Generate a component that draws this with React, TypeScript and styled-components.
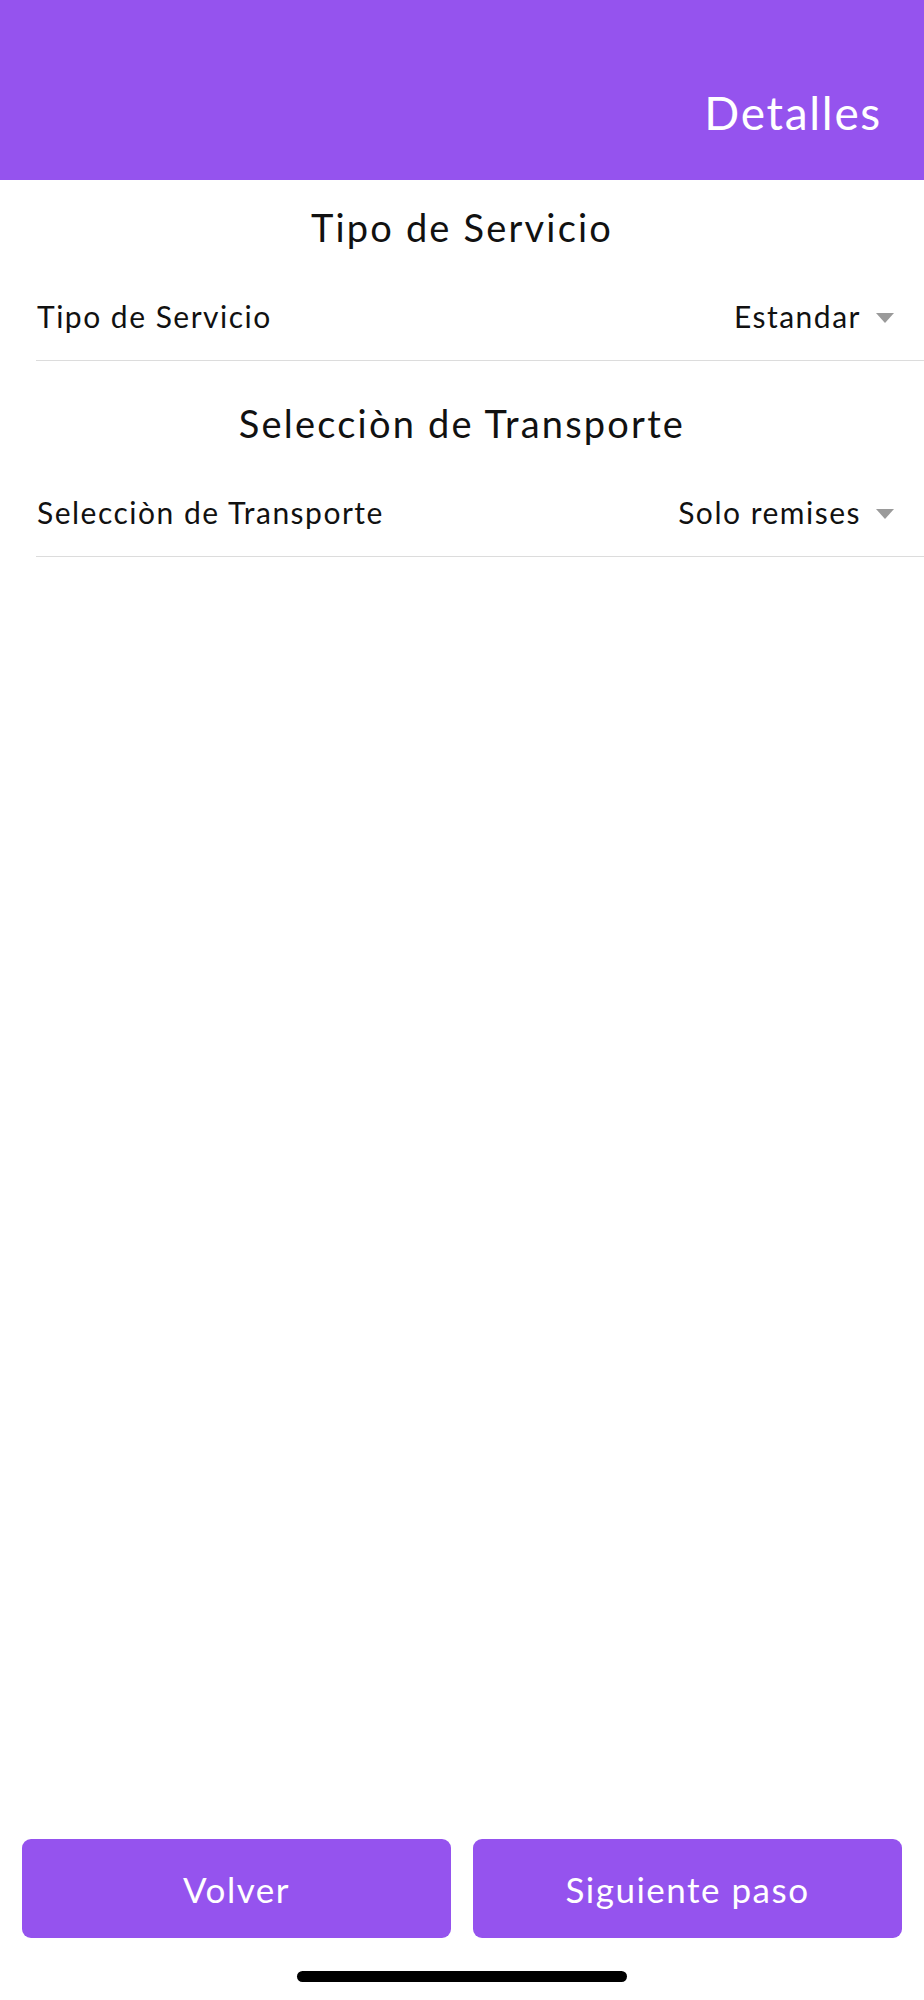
import React from "react";
import styled, { createGlobalStyle } from "styled-components";

const Global = createGlobalStyle`
  html, body { margin: 0; padding: 0; background: #ffffff; }
  body { font-family: Lato, "Open Sans", sans-serif; }
  * { box-sizing: border-box; }
`;

const PURPLE = "#9553ee";

const Page = styled.div`
  width: 924px;
  height: 2000px;
  display: flex;
  flex-direction: column;
  background: #fff;
  font-family: Lato, "Open Sans", sans-serif;
`;

const Header = styled.header`
  height: 180px;
  background: ${PURPLE};
  display: flex;
  align-items: center;
  justify-content: flex-end;
  padding: 45px 42px 0 0;
`;

const HeaderTitle = styled.h1`
  margin: 0;
  font-weight: 400;
  font-size: 46px;
  letter-spacing: 1.7px;
  line-height: 1;
  color: #fff;
`;

const Content = styled.main`
  flex: 1;
  display: flex;
  flex-direction: column;
  padding-top: 19px;
`;

const Section = styled.section`
  display: flex;
  flex-direction: column;
  & + & {
    margin-top: 34px;
  }
`;

const SectionTitle = styled.h2`
  margin: 0;
  height: 60px;
  padding-bottom: 5px;
  display: flex;
  align-items: center;
  justify-content: center;
  font-weight: 400;
  font-size: 38px;
  letter-spacing: 2.2px;
  color: #111;
`;

const Row = styled.div`
  margin-left: 36px;
  height: 102px;
  padding: 12px 30px 0 1px;
  display: flex;
  align-items: center;
  justify-content: space-between;
  border-bottom: 1px solid #dcdcdc;
  font-size: 30px;
  letter-spacing: 1.5px;
  color: #111;
`;

const Value = styled.div`
  display: flex;
  align-items: center;
  gap: 15px;
`;

const Caret = styled.span`
  width: 0;
  height: 0;
  margin-top: 4px;
  border-left: 9px solid transparent;
  border-right: 9px solid transparent;
  border-top: 10px solid #9a9a9a;
`;

const Footer = styled.footer`
  display: flex;
  flex-direction: column;
  align-items: center;
  padding: 0 22px 18px;
  gap: 33px;
`;

const Buttons = styled.div`
  width: 100%;
  display: grid;
  grid-template-columns: 1fr 1fr;
  gap: 22px;
`;

const Button = styled.button`
  height: 99px;
  border: none;
  border-radius: 9px;
  background: ${PURPLE};
  color: #fff;
  font-family: inherit;
  font-weight: 400;
  font-size: 35px;
  letter-spacing: 1.5px;
  cursor: pointer;
`;

const HomeIndicator = styled.div`
  width: 330px;
  height: 11px;
  border-radius: 6px;
  background: #000;
`;

const Select: React.FC<{ label: string; value: string }> = ({ label, value }) => (
  <Row>
    <span>{label}</span>
    <Value>
      <span>{value}</span>
      <Caret />
    </Value>
  </Row>
);

export default function App() {
  return (
    <>
      <Global />
      <Page>
        <Header>
          <HeaderTitle>Detalles</HeaderTitle>
        </Header>
        <Content>
          <Section>
            <SectionTitle>Tipo de Servicio</SectionTitle>
            <Select label="Tipo de Servicio" value="Estandar" />
          </Section>
          <Section>
            <SectionTitle>Selecciòn de Transporte</SectionTitle>
            <Select label="Selecciòn de Transporte" value="Solo remises" />
          </Section>
        </Content>
        <Footer>
          <Buttons>
            <Button>Volver</Button>
            <Button>Siguiente paso</Button>
          </Buttons>
          <HomeIndicator />
        </Footer>
      </Page>
    </>
  );
}
